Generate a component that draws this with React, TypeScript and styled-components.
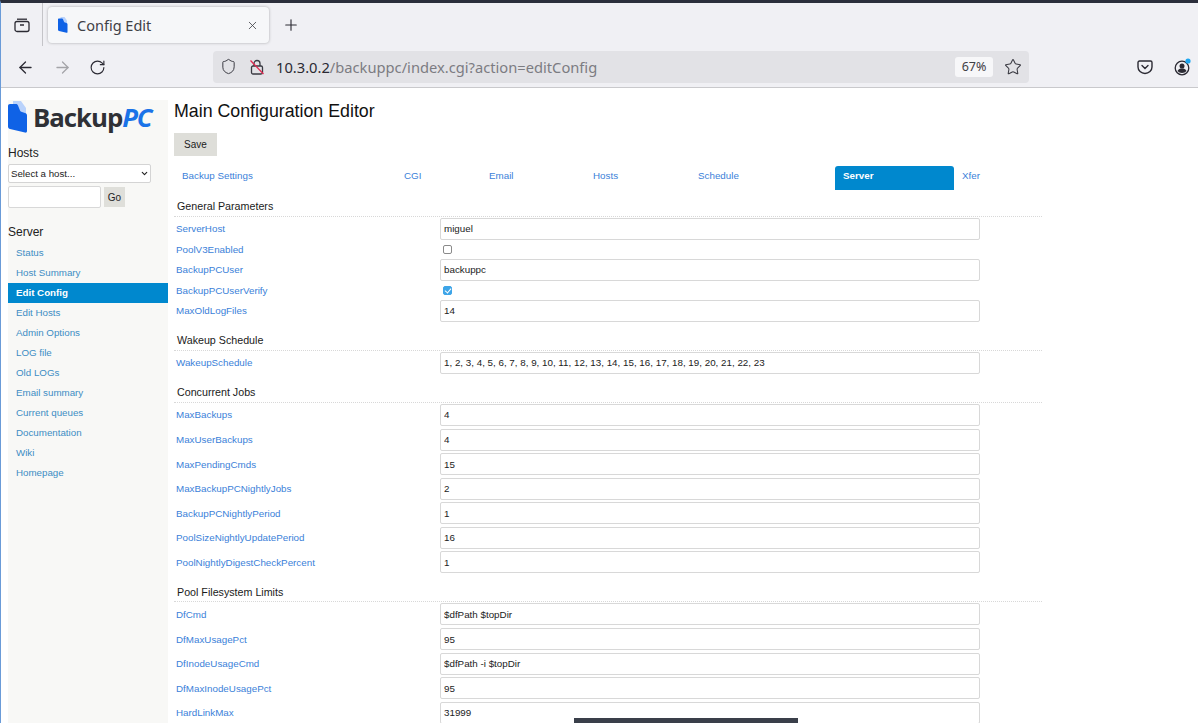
import React from "react";
import styled, { createGlobalStyle } from "styled-components";
import { ArrowLeft, ArrowRight, ChevronDown, Plus, RotateCw, Shield, Star, X } from "lucide-react";

const GlobalStyle = createGlobalStyle`
  html, body { margin: 0; padding: 0; background: #fff; overflow: hidden; }
  * { box-sizing: border-box; }
`;

const Window = styled.div`
  position: relative;
  width: 1198px;
  height: 723px;
  overflow: hidden;
  border-top: 3px solid #2b2e3b;
  border-left: 1px solid #6a9bd8;
  display: flex;
  flex-direction: column;
  font-family: "Liberation Sans", Arial, sans-serif;
`;

const TabStrip = styled.div`
  height: 44px;
  background: #f0f0f4;
  display: flex;
  align-items: flex-start;
  flex-shrink: 0;
`;

const ViewButton = styled.div`
  width: 42px;
  height: 43px;
  display: flex;
  align-items: center;
  justify-content: center;
  border-right: 1px solid #c4c4c8;
  color: #2b2a33;
`;

const Tab = styled.div`
  width: 221px;
  height: 36px;
  margin: 4px 0 0 5px;
  padding: 0 10px 0 10px;
  background: #f6f7f9;
  border-radius: 4px;
  box-shadow: 0 0 3px rgba(0, 0, 0, 0.3);
  display: flex;
  align-items: center;
  gap: 9px;
  color: #3f4046;
  font: 14.5px "Noto Sans", sans-serif;
`;

const TabTitle = styled.span`
  flex: 1;
`;

const NewTab = styled.div`
  width: 44px;
  height: 36px;
  margin-top: 4px;
  display: flex;
  align-items: center;
  justify-content: center;
  color: #2b2a33;
`;

const NavBar = styled.div`
  height: 41px;
  background: #f0f0f4;
  border-bottom: 1px solid #c9c9cc;
  padding-left: 15px;
  display: flex;
  align-items: center;
  flex-shrink: 0;
  color: #2b2a33;
`;

const NavIcon = styled.div<{ $width: number; $muted?: boolean }>`
  width: ${(p) => p.$width}px;
  display: flex;
  align-items: center;
  color: ${(p) => (p.$muted ? "#a4a4a8" : "inherit")};
`;

const UrlBar = styled.div`
  width: 816px;
  height: 32px;
  margin-left: 92px;
  margin-top: -1px;
  padding: 0 7px 0 7px;
  background: #e2e2e6;
  border-radius: 4px;
  display: flex;
  align-items: center;
  color: #3a3a42;
`;

const UrlIcon = styled.div<{ $width: number }>`
  width: ${(p) => p.$width}px;
  display: flex;
  align-items: center;
`;

const UrlText = styled.div`
  flex: 1;
  font: 14.7px "Noto Sans", sans-serif;
  color: #7c7c82;
  white-space: nowrap;

  b {
    font-weight: 400;
    color: #2b2a33;
  }
`;

const ZoomPill = styled.div`
  width: 38px;
  height: 20px;
  margin-right: 11px;
  background: #f7f7f9;
  border-radius: 3px;
  display: flex;
  align-items: center;
  justify-content: center;
  font: 12.5px "Noto Sans", sans-serif;
  color: #3f4046;
`;

const RightIcons = styled.div`
  margin-left: 108px;
  display: flex;
  gap: 21px;
  align-items: center;
`;

const Page = styled.div`
  flex: 1;
  min-height: 0;
  padding: 12px 0 0 7px;
  background: #fff;
  display: flex;
  overflow: hidden;
`;

const Sidebar = styled.aside`
  width: 160px;
  flex-shrink: 0;
  background: #f8f8f6;
`;

const Logo = styled.div`
  height: 33px;
  display: flex;
  align-items: center;
  gap: 5px;
  font: 700 25.8px "Open Sans", sans-serif;
  letter-spacing: -1.05px;
  color: #2f3136;

  i {
    color: #1a73e8;
    font-weight: 700;
  }
`;

const SideHeading = styled.div<{ $top: number }>`
  margin-top: ${(p) => p.$top}px;
  font-size: 12px;
  line-height: 14px;
  color: #222;
`;

const SelectWrap = styled.div`
  position: relative;
  width: 143px;
  height: 19px;
  margin-top: 4px;
  color: #222;

  svg {
    position: absolute;
    right: 2px;
    top: 5px;
    pointer-events: none;
  }
`;

const HostSelect = styled.select`
  display: block;
  width: 100%;
  height: 100%;
  padding: 0 0 0 2px;
  appearance: none;
  background: #fff;
  border: 1px solid #d4d4d4;
  border-radius: 2px;
  font: 9.7px "Liberation Sans", sans-serif;
  color: #222;
`;

const SearchRow = styled.div`
  display: flex;
  align-items: center;
  margin-top: 3px;
`;

const SearchInput = styled.input`
  width: 93px;
  height: 22px;
  background: #fff;
  border: 1px solid #d8d8d8;
  border-radius: 2px;
`;

const GoButton = styled.button`
  width: 21px;
  height: 20px;
  margin-left: 3px;
  padding: 0;
  background: #dfdfda;
  border: 0;
  font: 10px "Liberation Sans", sans-serif;
  color: #222;
`;

const SideMenu = styled.nav`
  margin-top: 4px;
`;

const SideLink = styled.a<{ $active?: boolean }>`
  display: block;
  height: 20px;
  padding-left: 8px;
  line-height: 20px;
  font-size: 9.75px;
  font-weight: ${(p) => (p.$active ? 700 : 400)};
  color: ${(p) => (p.$active ? "#fff" : "#3d8dc4")};
  background: ${(p) => (p.$active ? "#0088ce" : "transparent")};
`;

const Main = styled.main`
  width: 868px;
  margin-left: 6px;
`;

const Title = styled.h1`
  margin: 0;
  font-size: 17.8px;
  font-weight: 400;
  line-height: 22px;
  color: #111;
`;

const SaveButton = styled.button`
  display: block;
  width: 43px;
  height: 23px;
  margin-top: 11px;
  padding: 0;
  background: #deded9;
  border: 0;
  font: 10px "Liberation Sans", sans-serif;
  color: #222;
`;

const Tabs = styled.div`
  display: flex;
  margin-top: 10px;
  height: 23.3px;
`;

const ConfigTab = styled.a<{ $width: number; $active?: boolean }>`
  width: ${(p) => p.$width}px;
  height: 24px;
  padding: 4px 8px 0;
  line-height: 11px;
  font-size: 9.8px;
  font-weight: ${(p) => (p.$active ? 700 : 400)};
  color: ${(p) => (p.$active ? "#fff" : "#3b7fd9")};
  background: ${(p) => (p.$active ? "#0088ce" : "transparent")};
  border-radius: 3px 3px 0 0;
`;

const SectionHead = styled.div`
  height: 27.4px;
  padding: 10px 0 0 3px;
  line-height: 14px;
  font-size: 10.7px;
  color: #1a1a1a;
  border-bottom: 1px dotted #d8d8d8;
`;

const Row = styled.div<{ $check?: boolean }>`
  height: ${(p) => (p.$check ? 16.4 : 24.6)}px;
  display: flex;
  align-items: center;
`;

const RowLabel = styled.a`
  width: 266px;
  padding-left: 2px;
  font-size: 9.8px;
  color: #3b7fd9;
`;

const ValueInput = styled.input`
  width: 540px;
  height: 22px;
  padding: 0 3px;
  background: #fff;
  border: 1px solid #d8d8d8;
  border-radius: 2px;
  font: 9.8px "Liberation Sans", sans-serif;
  color: #222;
`;

const CheckBox = styled.input`
  position: relative;
  appearance: none;
  width: 9px;
  height: 9px;
  margin: 0 0 0 3px;
  background: #fff;
  border: 1px solid #8a8a8a;
  border-radius: 2px;

  &:checked {
    background: #3ea5e8;
    border-color: #3ea5e8;
  }

  &:checked::after {
    content: "";
    position: absolute;
    left: 2px;
    top: 0;
    width: 3px;
    height: 5px;
    border: solid #fff;
    border-width: 0 1.3px 1.3px 0;
    transform: rotate(40deg);
  }
`;

const BottomToast = styled.div`
  position: absolute;
  left: 573px;
  bottom: 0;
  width: 224px;
  height: 5px;
  background: #3a3f4a;
`;

const sideLinks = [
  "Status",
  "Host Summary",
  "Edit Config",
  "Edit Hosts",
  "Admin Options",
  "LOG file",
  "Old LOGs",
  "Email summary",
  "Current queues",
  "Documentation",
  "Wiki",
  "Homepage",
];

const configTabs = [
  { name: "Backup Settings", width: 222 },
  { name: "CGI", width: 85 },
  { name: "Email", width: 104 },
  { name: "Hosts", width: 105 },
  { name: "Schedule", width: 145 },
  { name: "Server", width: 119, active: true },
  { name: "Xfer", width: 60 },
];

type Field = { name: string; value?: string; checked?: boolean };

const sections: { title: string; fields: Field[] }[] = [
  {
    title: "General Parameters",
    fields: [
      { name: "ServerHost", value: "miguel" },
      { name: "PoolV3Enabled", checked: false },
      { name: "BackupPCUser", value: "backuppc" },
      { name: "BackupPCUserVerify", checked: true },
      { name: "MaxOldLogFiles", value: "14" },
    ],
  },
  {
    title: "Wakeup Schedule",
    fields: [
      {
        name: "WakeupSchedule",
        value:
          "1, 2, 3, 4, 5, 6, 7, 8, 9, 10, 11, 12, 13, 14, 15, 16, 17, 18, 19, 20, 21, 22, 23",
      },
    ],
  },
  {
    title: "Concurrent Jobs",
    fields: [
      { name: "MaxBackups", value: "4" },
      { name: "MaxUserBackups", value: "4" },
      { name: "MaxPendingCmds", value: "15" },
      { name: "MaxBackupPCNightlyJobs", value: "2" },
      { name: "BackupPCNightlyPeriod", value: "1" },
      { name: "PoolSizeNightlyUpdatePeriod", value: "16" },
      { name: "PoolNightlyDigestCheckPercent", value: "1" },
    ],
  },
  {
    title: "Pool Filesystem Limits",
    fields: [
      { name: "DfCmd", value: "$dfPath $topDir" },
      { name: "DfMaxUsagePct", value: "95" },
      { name: "DfInodeUsageCmd", value: "$dfPath -i $topDir" },
      { name: "DfMaxInodeUsagePct", value: "95" },
      { name: "HardLinkMax", value: "31999" },
    ],
  },
];

function LogoMark(props: { size: number }) {
  const h = props.size;
  return (
    <svg width={(h * 20) / 32} height={h} viewBox="0 0 20 32">
      <path d="M5 0h8l5 7v10H5z" fill="#b9d2fb" />
      <path
        d="M2 3h6c1 0 1.600.5 2 1.500l2 5c.3.800 1 1.200 2 1.500l3 1c1 .3 2 1 2 2.500V30c0 1.500-1 2-2 1.600L2 28c-1-.3-2-1-2-2.500V5c0-1.200.8-2 2-2z"
        fill="#0f62e6"
      />
    </svg>
  );
}

function FirefoxViewIcon() {
  return (
    <svg width="16" height="16" viewBox="0 0 16 16" fill="none" stroke="currentColor" strokeWidth="1.300">
      <rect x="1" y="4.500" width="14" height="10" rx="2" />
      <path d="M3 2.200h10" />
      <path d="M6 8h4" strokeWidth="1.500" />
    </svg>
  );
}

function BrokenLockIcon() {
  return (
    <svg width="16" height="16" viewBox="0 0 16 16" fill="none" stroke="#3a3a42" strokeWidth="1.300">
      <rect x="2.500" y="7" width="11" height="8" rx="1.500" />
      <path d="M5 7V4.500a3 3 0 0 1 6 0V7" />
      <path d="M1.500 1.500l13 13.500" stroke="#e22850" strokeWidth="1.300" />
    </svg>
  );
}

function PocketIcon() {
  return (
    <svg width="16" height="16" viewBox="0 0 16 16" fill="none" stroke="#2b2a33" strokeWidth="1.400">
      <path d="M2.500 2h11c.8 0 1.500.7 1.500 1.500V8a7 6.500 0 0 1-14 0V3.500C1 2.700 1.700 2 2.500 2z" />
      <path d="M5 6.500l3 3 3-3" strokeLinecap="round" />
    </svg>
  );
}

function AccountIcon() {
  return (
    <svg width="18" height="18" viewBox="0 0 18 18">
      <circle cx="8" cy="10" r="6.800" fill="none" stroke="#2b2a33" strokeWidth="1.300" />
      <circle cx="8" cy="8" r="2.500" fill="#2b2a33" />
      <path d="M3.500 13c1-2 2.500-2.500 4.500-2.500s3.500.5 4.500 2.500c-1 1.300-2.700 2-4.500 2s-3.500-.7-4.500-2z" fill="#2b2a33" />
      <circle cx="14" cy="3" r="2.600" fill="#1ea7f0" />
    </svg>
  );
}

export default function App() {
  return (
    <>
      <GlobalStyle />
      <Window>
        <TabStrip>
          <ViewButton>
            <FirefoxViewIcon />
          </ViewButton>
          <Tab>
            <LogoMark size={16} />
            <TabTitle>Config Edit</TabTitle>
            <X size={13} strokeWidth={1.5} />
          </Tab>
          <NewTab>
            <Plus size={18} strokeWidth={1.5} />
          </NewTab>
        </TabStrip>
        <NavBar>
          <NavIcon $width={37}>
            <ArrowLeft size={19} strokeWidth={1.6} />
          </NavIcon>
          <NavIcon $width={36} $muted>
            <ArrowRight size={19} strokeWidth={1.6} />
          </NavIcon>
          <NavIcon $width={32}>
            <RotateCw size={17} strokeWidth={1.6} />
          </NavIcon>
          <UrlBar>
            <UrlIcon $width={29}>
              <Shield size={17} strokeWidth={1.4} />
            </UrlIcon>
            <UrlIcon $width={27}>
              <BrokenLockIcon />
            </UrlIcon>
            <UrlText>
              <b>10.3.0.2</b>/backuppc/index.cgi?action=editConfig
            </UrlText>
            <ZoomPill>67%</ZoomPill>
            <Star size={18} strokeWidth={1.4} />
          </UrlBar>
          <RightIcons>
            <PocketIcon />
            <AccountIcon />
          </RightIcons>
        </NavBar>
        <Page>
          <Sidebar>
            <Logo>
              <LogoMark size={32} />
              <span>
                Backup<i>PC</i>
              </span>
            </Logo>
            <SideHeading $top={13}>Hosts</SideHeading>
            <SelectWrap>
              <HostSelect defaultValue="">
                <option value="">Select a host...</option>
              </HostSelect>
              <ChevronDown size={9} strokeWidth={3} />
            </SelectWrap>
            <SearchRow>
              <SearchInput />
              <GoButton>Go</GoButton>
            </SearchRow>
            <SideHeading $top={17}>Server</SideHeading>
            <SideMenu>
              {sideLinks.map((link) => (
                <SideLink key={link} $active={link === "Edit Config"}>
                  {link}
                </SideLink>
              ))}
            </SideMenu>
          </Sidebar>
          <Main>
            <Title>Main Configuration Editor</Title>
            <SaveButton>Save</SaveButton>
            <Tabs>
              {configTabs.map((tab) => (
                <ConfigTab key={tab.name} $width={tab.width} $active={tab.active}>
                  {tab.name}
                </ConfigTab>
              ))}
            </Tabs>
            {sections.map((section) => (
              <section key={section.title}>
                <SectionHead>{section.title}</SectionHead>
                {section.fields.map((field) => (
                  <Row key={field.name} $check={field.value === undefined}>
                    <RowLabel>{field.name}</RowLabel>
                    {field.value === undefined ? (
                      <CheckBox type="checkbox" defaultChecked={field.checked} />
                    ) : (
                      <ValueInput defaultValue={field.value} />
                    )}
                  </Row>
                ))}
              </section>
            ))}
          </Main>
        </Page>
        <BottomToast />
      </Window>
    </>
  );
}
